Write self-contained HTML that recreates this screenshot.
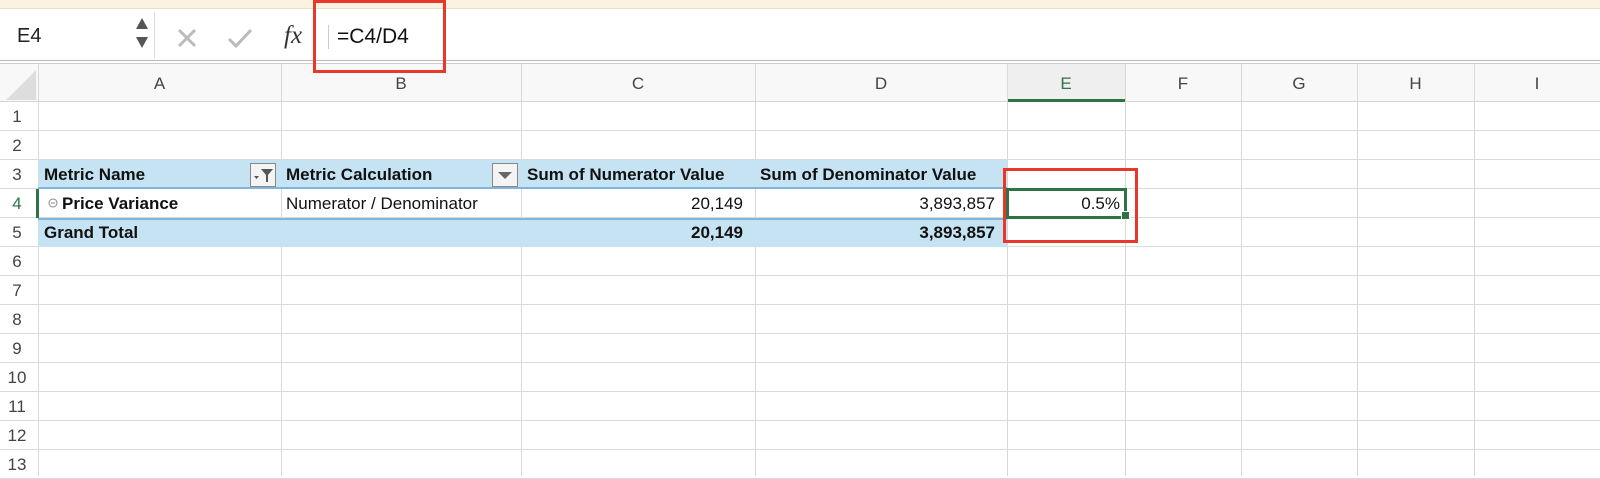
<!DOCTYPE html>
<html><head><style>
body{margin:0;width:1600px;height:476px;overflow:hidden;background:#fff;font-family:"Liberation Sans",Arial,sans-serif;position:relative}
div{position:absolute;box-sizing:border-box}
.t{white-space:nowrap;font-size:17px;color:#111}
.hl{background:#f8f8f8}
.b{font-weight:bold}
</style></head><body>
<div style="left:0;top:0;width:1600px;height:9px;background:#fbf3e1;border-bottom:1px solid #e8e0cc"></div>
<div style="left:0;top:9px;width:1600px;height:51px;background:#fff"></div>
<div class="t" style="left:17px;top:25px;font-size:20px;color:#222">E4</div>
<svg style="position:absolute;left:135px;top:16px" width="14" height="34"><path d="M7 2 L13 13 L1 13Z M7 32 L13 21 L1 21Z" fill="#555"/></svg>
<div style="left:154px;top:12px;width:1px;height:46px;background:#ddd"></div>
<svg style="position:absolute;left:176px;top:27px" width="90" height="24"><path d="M3 3 L19 19 M19 3 L3 19" stroke="#bbb" stroke-width="3"/><path d="M53 12 L60 19 L75 3" stroke="#bbb" stroke-width="3" fill="none"/></svg>
<div class="t" style="left:284px;top:22px;font-family:'Liberation Serif',serif;font-style:italic;font-size:25px;color:#333">fx</div>
<div style="left:328px;top:25px;width:1px;height:24px;background:#ccc"></div>
<div class="t" style="left:337px;top:25px;font-size:21px;color:#111">=C4/D4</div>
<div style="left:0;top:60px;width:1600px;height:4px;border-top:1px solid #bbb;border-bottom:1px solid #ccc"></div>
<div class="hl" style="left:0;top:64px;width:1600px;height:38px;border-bottom:1px solid #d4d4d4"></div>
<svg style="position:absolute;left:6px;top:70px" width="30" height="30"><path d="M30 0 L30 30 L0 30Z" fill="#ddd"/></svg>
<div style="left:1007px;top:64px;width:118px;height:38px;background:#efefef;border-bottom:3px solid #2f7246"></div>
<div id="grid"></div>
<div style="left:38px;top:160px;width:969px;height:29px;background:#c6e3f3;border-bottom:2px solid #7cb6dc"></div>
<div style="left:38px;top:218px;width:969px;height:29px;background:#c6e3f3;border-top:2px solid #7cb6dc"></div>
<div style="left:36px;top:189px;width:3px;height:29px;background:#2f7246"></div>
<div class="t b" style="left:44px;top:165px">Metric Name</div>
<div style="left:250px;top:163px;width:26px;height:24px;border:1px solid #888;background:#f4f4f4"></div>
<svg style="position:absolute;left:252px;top:166px" width="24" height="20"><path d="M2 10 L7 10 L4.5 13Z" fill="#555"/><path d="M9 3 L21 3 L16 9 L16 16 L14 16 L14 9Z" fill="#555"/></svg>
<div class="t b" style="left:286px;top:165px">Metric Calculation</div>
<div style="left:492px;top:163px;width:26px;height:24px;border:1px solid #888;background:#f4f4f4"></div>
<svg style="position:absolute;left:495px;top:166px" width="20" height="18"><path d="M3 6 L17 6 L10 13Z" fill="#666"/></svg>
<div class="t b" style="left:527px;top:165px">Sum of Numerator Value</div>
<div class="t b" style="left:760px;top:165px">Sum of Denominator Value</div>
<svg style="position:absolute;left:48px;top:198px" width="10" height="10"><circle cx="5" cy="5" r="4" fill="none" stroke="#888" stroke-width="1"/><path d="M3 5 L7 5" stroke="#888"/></svg>
<div class="t b" style="left:62px;top:194px">Price Variance</div>
<div class="t" style="left:286px;top:194px">Numerator / Denominator</div>
<div class="t" style="left:521px;top:194px;width:222px;text-align:right">20,149</div>
<div class="t" style="left:755px;top:194px;width:240px;text-align:right">3,893,857</div>
<div class="t b" style="left:44px;top:223px">Grand Total</div>
<div class="t b" style="left:521px;top:223px;width:222px;text-align:right">20,149</div>
<div class="t b" style="left:755px;top:223px;width:240px;text-align:right">3,893,857</div>
<div style="left:1006px;top:188px;width:121px;height:31px;border:3px solid #2f7246"></div>
<div style="left:1121px;top:211px;width:9px;height:9px;background:#2f7246;border:1px solid #fff"></div>
<div class="t" style="left:1007px;top:194px;width:113px;text-align:right">0.5%</div>
<div style="left:313px;top:0;width:133px;height:73px;border:3px solid #e8382a"></div>
<div style="left:1003px;top:168px;width:135px;height:75px;border:3px solid #e8382a"></div>
<script>
var h='';
var cx=[0,38,281,521,755,1007,1125,1241,1357,1474,1600],L=['A','B','C','D','E','F','G','H','I'];
for(var i=1;i<cx.length-1;i++)h+='<div style="left:'+cx[i]+'px;top:64px;width:1px;height:412px;background:#d8d8d8"></div>';
for(var i=0;i<9;i++)h+='<div class="t" style="left:'+cx[i+1]+'px;top:74px;width:'+(cx[i+2]-cx[i+1])+'px;text-align:center;font-size:17px;color:'+(i==4?'#2f7246':'#444')+'">'+L[i]+'</div>';
for(var r=1;r<=13;r++){var y=102+(r-1)*29;h+='<div style="left:0;top:'+(y+28)+'px;width:1600px;height:1px;background:#dadada"></div>';
h+='<div class="t" style="left:0;top:'+(y+5)+'px;width:34px;text-align:center;color:'+(r==4?'#2f7246':'#444')+'">'+r+'</div>';}
var d=document.createElement('div');d.style.cssText='left:0;top:0;width:1600px;height:476px';d.innerHTML=h;
document.body.insertBefore(d,document.getElementById('grid'));
</script>
</body></html>
